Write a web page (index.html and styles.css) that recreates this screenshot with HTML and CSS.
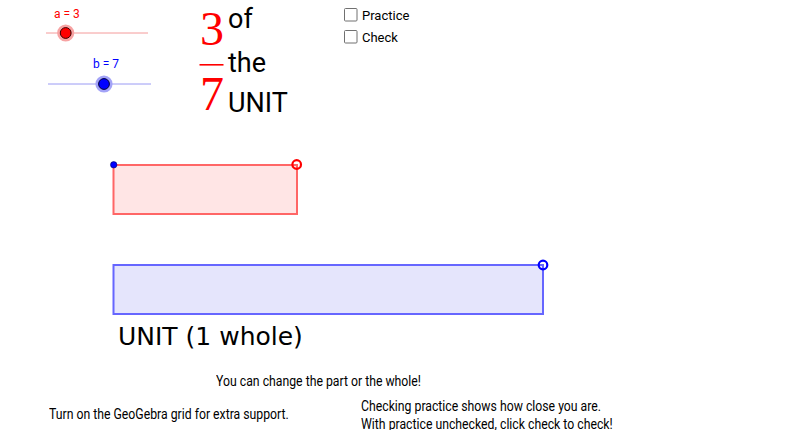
FILE: index.html
```html
<!DOCTYPE html>
<html>
<head>
<meta charset="utf-8">
<link rel="stylesheet" href="styles.css">
</head>
<body>
<div class="applet">
  <svg class="drawing" width="800" height="430" viewBox="0 0 800 430">
    <!-- slider a -->
    <line x1="46" y1="33" x2="148" y2="33" class="slider-line-a"/>
    <circle cx="65.7" cy="33" r="8.6" class="halo-a"/>
    <circle cx="65.7" cy="33" r="5.4" class="knob-a"/>
    <!-- slider b -->
    <line x1="48" y1="84" x2="151" y2="84" class="slider-line-b"/>
    <circle cx="104" cy="84" r="8.6" class="halo-b"/>
    <circle cx="104" cy="84" r="5.4" class="knob-b"/>
    <!-- fraction bar -->
    <rect x="199.5" y="64" width="24" height="1.6" fill="#ff0000"/>
    <!-- part rectangle -->
    <rect x="113.5" y="165" width="183.5" height="49" class="part"/>
    <circle cx="113.7" cy="164.8" r="3.2" class="dot"/>
    <circle cx="296.7" cy="164.5" r="4.3" class="ring-red"/>
    <!-- unit rectangle -->
    <rect x="113.5" y="265" width="429.5" height="49" class="unit"/>
    <circle cx="543" cy="265" r="4.3" class="ring-blue"/>
    <!-- checkboxes -->
    <rect x="344.5" y="8.5" width="12.5" height="12.5" rx="1" class="box"/>
    <rect x="344.5" y="30.5" width="12.5" height="12.5" rx="1" class="box"/>
  </svg>

  <div class="label label-a">a = 3</div>
  <div class="label label-b">b = 7</div>

  <div class="digit digit-num">3</div>
  <div class="digit digit-den">7</div>

  <div class="word word-of">of</div>
  <div class="word word-the">the</div>
  <div class="word word-unit">UNIT</div>

  <div class="check check-practice">Practice</div>
  <div class="check check-check">Check</div>

  <div class="caption">UNIT (1 whole)</div>

  <div class="note note-change">You can change the part or the whole!</div>
  <div class="note note-grid">Turn on the GeoGebra grid for extra support.</div>
  <div class="note note-practice">Checking practice shows how close you are.<br>With practice unchecked, click check to check!</div>
</div>
</body>
</html>
```
FILE: styles.css
```css
html, body {
  margin: 0;
  padding: 0;
  background: #ffffff;
  overflow: hidden;
}

.applet {
  position: relative;
  width: 800px;
  height: 430px;
  font-family: Roboto, "Liberation Sans", sans-serif;
  color: #000;
}

.drawing {
  position: absolute;
  left: 0;
  top: 0;
}

.slider-line-a { stroke: #f49a9a; stroke-width: 1; }
.slider-line-b { stroke: #9a9af4; stroke-width: 1; }
.halo-a { fill: #f7a3a3; }
.halo-b { fill: #a3a3f7; }
.knob-a { fill: #ff0000; stroke: #3a0000; stroke-width: 1; }
.knob-b { fill: #0000ff; stroke: #00003a; stroke-width: 1; }

.part { fill: #ffe5e5; stroke: #ff6666; stroke-width: 2; }
.unit { fill: #e5e5fc; stroke: #6666ff; stroke-width: 2; }
.dot { fill: #0000ff; stroke: #000060; stroke-width: 0.6; }
.ring-red { fill: none; stroke: #ff0000; stroke-width: 2.2; }
.ring-blue { fill: none; stroke: #0000ff; stroke-width: 2.2; }
.box { fill: #ffffff; stroke: #707070; stroke-width: 1; }

.label,
.digit,
.word,
.check,
.caption,
.note {
  position: absolute;
  white-space: nowrap;
}

.label {
  font-size: 12px;
  line-height: 12px;
}
.label-a { left: 54px; top: 8px; color: #ff0000; }
.label-b { left: 93px; top: 58px; color: #0000ff; }

.digit {
  font-family: "Liberation Serif", serif;
  font-size: 48px;
  line-height: 48px;
  color: #ff0000;
}
.digit-num { left: 200px; top: 5px; }
.digit-den { left: 200px; top: 70px; }

.word {
  font-size: 27px;
  line-height: 27px;
}
.word-of { left: 228px; top: 6px; }
.word-the { left: 228px; top: 50px; }
.word-unit { left: 228px; top: 90px; }

.check {
  font-size: 13px;
  line-height: 13px;
}
.check-practice { left: 362px; top: 9px; }
.check-check { left: 362px; top: 31px; }

.caption {
  font-family: "DejaVu Sans", sans-serif;
  font-size: 25px;
  line-height: 25px;
  left: 118px;
  top: 324px;
}

.note {
  font-size: 14px;
  line-height: 18px;
  transform: scaleX(0.875);
  transform-origin: left top;
}
.note-change { left: 216px; top: 372px; }
.note-grid { left: 49px; top: 405px; }
.note-practice { left: 361px; top: 397px; }
```
